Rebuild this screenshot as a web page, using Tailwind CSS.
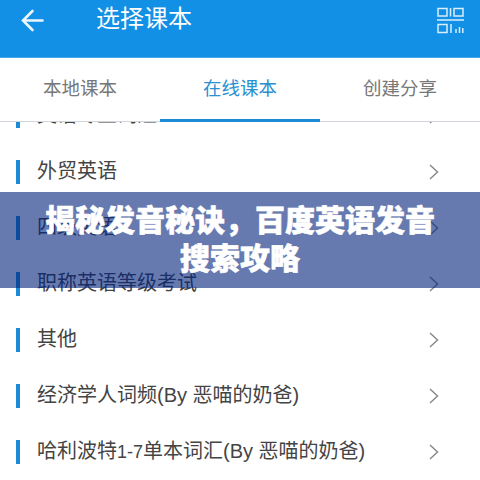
<!DOCTYPE html>
<html lang="zh">
<head>
    <meta charset="UTF-8">
    <title>选择课本</title>
    <script src="https://cdn.jsdelivr.net/npm/@tailwindcss/browser@4"></script>
</head>
<body class="bg-white overflow-hidden">
    <div class="relative w-[480px] h-[480px] overflow-hidden bg-white font-['Liberation_Sans','Noto_Sans_CJK_SC',sans-serif]">
        <!-- header -->
        <header class="relative z-10 h-[58px] bg-[#1290e5] border-b border-[#4aa9ea] flex items-start text-white">
            <div class="w-[96px] pl-[21px] pt-[9px]">
                <svg class="w-[23px] h-[23px]" viewBox="0 0 23 23" fill="none" stroke="#eaf5fd" stroke-width="2.6" stroke-linecap="round">
                    <path d="M21.5 11.5H2M11.5 2L2 11.5l9.5 9.5" />
                </svg>
            </div>
            <h1 class="pt-[4px] text-[24px] leading-[30px] font-normal">选择课本</h1>
            <div class="ml-auto pr-[16px] pt-[7px]">
                <svg class="w-[27px] h-[27px]" viewBox="0 0 27 27" fill="none" stroke="#d8eefc" stroke-width="1.5">
                    <rect x="1" y="1.5" width="9" height="7.5" />
                    <rect x="17" y="1.5" width="9" height="7.5" />
                    <path d="M13.5 1v8.5M0 13h27" />
                    <rect x="1" y="17.5" width="9" height="8" />
                    <path d="M14 17v9M19 22v4M22.5 20v6M25.8 21v5" />
                </svg>
            </div>
        </header>

        <!-- tabs -->
        <nav class="relative z-10 h-[64px] bg-white border-b border-gray-300 flex text-[18.5px] leading-[26px]">
            <div class="flex-1 flex justify-center pt-[18px] text-[#777777]">本地课本</div>
            <div class="flex-1 flex justify-center pt-[18px] text-[#2b8fd0] border-b-[3px] border-[#1d8ad6] h-[64px]">在线课本</div>
            <div class="flex-1 flex justify-center pt-[18px] text-[#777777]">创建分享</div>
        </nav>

        <!-- list -->
        <ul class="-mt-[34px] text-[20px] text-[#444444]">
            <li class="h-[56px] flex items-center pl-4 pr-[41px]">
                <span class="w-1 h-6 bg-[#1d8ad6]"></span>
                <span class="ml-[17px] pb-[2px]">英语专业词汇</span>
                <svg class="ml-auto w-[10px] h-[16px]" viewBox="0 0 10 16" fill="none" stroke="#8a8a8a" stroke-width="1.5"><path d="M1 1l7.5 7L1 15" /></svg>
            </li>
            <li class="h-[56px] flex items-center pl-4 pr-[41px]">
                <span class="w-1 h-6 bg-[#1d8ad6]"></span>
                <span class="ml-[17px] pb-[2px]">外贸英语</span>
                <svg class="ml-auto w-[10px] h-[16px]" viewBox="0 0 10 16" fill="none" stroke="#8a8a8a" stroke-width="1.5"><path d="M1 1l7.5 7L1 15" /></svg>
            </li>
            <li class="h-[56px] flex items-center pl-4 pr-[41px]">
                <span class="w-1 h-6 bg-[#1d8ad6]"></span>
                <span class="ml-[17px] pb-[2px]">四级英语</span>
                <svg class="ml-auto w-[10px] h-[16px]" viewBox="0 0 10 16" fill="none" stroke="#8a8a8a" stroke-width="1.5"><path d="M1 1l7.5 7L1 15" /></svg>
            </li>
            <li class="h-[56px] flex items-center pl-4 pr-[41px]">
                <span class="w-1 h-6 bg-[#1d8ad6]"></span>
                <span class="ml-[17px] pb-[2px]">职称英语等级考试</span>
                <svg class="ml-auto w-[10px] h-[16px]" viewBox="0 0 10 16" fill="none" stroke="#8a8a8a" stroke-width="1.5"><path d="M1 1l7.5 7L1 15" /></svg>
            </li>
            <li class="h-[56px] flex items-center pl-4 pr-[41px]">
                <span class="w-1 h-6 bg-[#1d8ad6]"></span>
                <span class="ml-[17px] pb-[2px]">其他</span>
                <svg class="ml-auto w-[10px] h-[16px]" viewBox="0 0 10 16" fill="none" stroke="#8a8a8a" stroke-width="1.5"><path d="M1 1l7.5 7L1 15" /></svg>
            </li>
            <li class="h-[56px] flex items-center pl-4 pr-[41px]">
                <span class="w-1 h-6 bg-[#1d8ad6]"></span>
                <span class="ml-[17px] pb-[2px]">经济学人词频(By 恶喵的奶爸)</span>
                <svg class="ml-auto w-[10px] h-[16px]" viewBox="0 0 10 16" fill="none" stroke="#8a8a8a" stroke-width="1.5"><path d="M1 1l7.5 7L1 15" /></svg>
            </li>
            <li class="h-[56px] flex items-center pl-4 pr-[41px]">
                <span class="w-1 h-6 bg-[#1d8ad6]"></span>
                <span class="ml-[17px] pb-[2px]">哈利波特<span class="text-[18px]">1-7</span>单本词汇(By 恶喵的奶爸)</span>
                <svg class="ml-auto w-[10px] h-[16px]" viewBox="0 0 10 16" fill="none" stroke="#8a8a8a" stroke-width="1.5"><path d="M1 1l7.5 7L1 15" /></svg>
            </li>
        </ul>

        <!-- title banner over the list -->
        <div class="absolute z-20 left-0 top-[192px] w-[480px] h-[96px] bg-[#00217b]/60 flex items-center justify-center px-[44px]">
            <h2 class="text-center text-[30px] leading-[38px] font-black text-white [-webkit-text-stroke:0.6px_white]">揭秘发音秘诀，百度英语发音搜索攻略</h2>
        </div>
    </div>
</body>
</html>
